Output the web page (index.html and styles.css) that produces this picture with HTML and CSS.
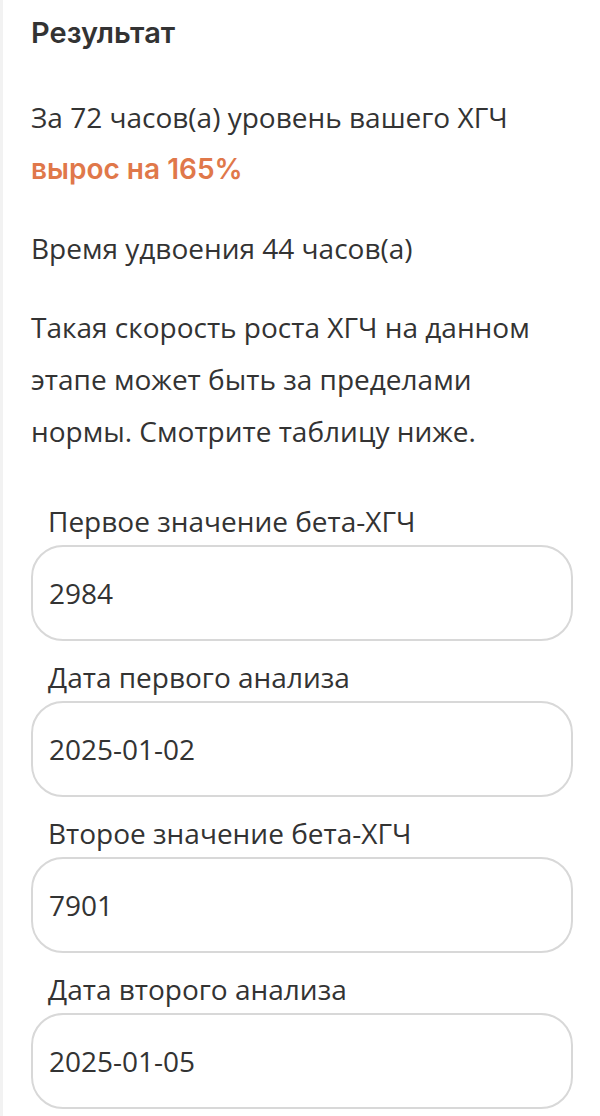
FILE: index.html
```html
<!DOCTYPE html>
<html lang="ru">
<head>
    <meta charset="UTF-8">
    <meta name="viewport" content="width=device-width, initial-scale=1.0">
    <title>Калькулятор ХГЧ</title>
    <link rel="stylesheet" href="styles.css">
</head>
<body>
    <div class="page">
        <section class="result">
            <h2 class="result-title">Результат</h2>
            <p>За 72 часов(а) уровень вашего ХГЧ <span class="growth">вырос на 165%</span></p>
            <p>Время удвоения 44 часов(а)</p>
            <p>Такая скорость роста ХГЧ на данном этапе может быть за пределами нормы. Смотрите таблицу ниже.</p>
        </section>

        <form class="calc-form">
            <div class="field">
                <label for="hcg1">Первое значение бета-ХГЧ</label>
                <input type="text" id="hcg1" class="field-input" value="2984">
            </div>
            <div class="field">
                <label for="date1">Дата первого анализа</label>
                <input type="text" id="date1" class="field-input" value="2025-01-02">
            </div>
            <div class="field">
                <label for="hcg2">Второе значение бета-ХГЧ</label>
                <input type="text" id="hcg2" class="field-input" value="7901">
            </div>
            <div class="field">
                <label for="date2">Дата второго анализа</label>
                <input type="text" id="date2" class="field-input" value="2025-01-05">
            </div>
        </form>
    </div>
</body>
</html>
```

FILE: styles.css
```css
body {
    margin: 0;
    background: #fff;
    color: #333;
    font-family: "Open Sans", "Noto Sans", sans-serif;
    font-size: 28px;
}
.page {
    border-left: 3px solid #f2f2f2;
    padding: 0 27px 0 28px;
    min-height: 1116px;
    box-sizing: border-box;
}
.result {
    padding-top: 13px;
}
.result-title {
    margin: 0 0 38px;
    font-family: Inter, "Open Sans", sans-serif;
    font-weight: 600;
    font-size: 29px;
    line-height: 40px;
}
.result p {
    margin: 0 0 27px;
    line-height: 52px;
}
.growth {
    display: block;
    color: #e0784a;
    font-family: Inter, "Open Sans", sans-serif;
    font-weight: 600;
    font-size: 28px;
}
.calc-form {
    padding-top: 19px;
    display: grid;
    gap: 18px;
}
.field {
    display: grid;
    gap: 6px;
}
.field label {
    padding-left: 17px;
    line-height: 36px;
}
.field-input {
    height: 96px;
    box-sizing: border-box;
    border: 2px solid #d8d8d8;
    border-radius: 32px;
    padding: 0 16px;
    font-family: inherit;
    font-size: 28px;
    color: #333;
    background: #fff;
    outline: none;
}
```
